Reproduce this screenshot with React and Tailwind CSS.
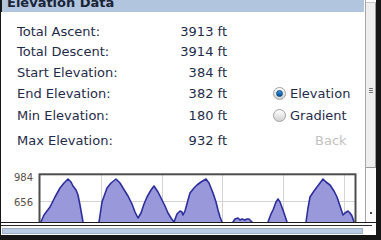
import React from 'react';

const profile = [
  [40, 224], [44, 215], [50, 207], [55, 197], [60, 188], [64, 183], [68, 179], [71, 182], [73, 186],
  [76, 190], [78, 195], [80, 205], [83, 222], [86, 232], [92, 236], [97, 230], [99, 222], [102, 202],
  [107, 188], [111, 183], [116, 179], [120, 183], [123, 188], [128, 196], [132, 204], [135, 212],
  [138, 218], [141, 213], [144, 204], [147, 197], [151, 190], [154, 186], [158, 192], [162, 200],
  [165, 206], [168, 213], [171, 218], [174, 222], [177, 214], [180, 211], [182, 212], [183, 215],
  [185, 211], [188, 200], [190, 193], [194, 188], [197, 185], [201, 182], [206, 179], [209, 183],
  [211, 188], [213, 193], [216, 202], [218, 210], [220, 217], [222, 222], [226, 230], [230, 228],
  [233, 222], [235, 219], [238, 218], [240, 220], [242, 219], [245, 220], [247, 219], [249, 219],
  [252, 222], [258, 232], [265, 228], [268, 222], [271, 214], [273, 210], [276, 202], [278, 199],
  [280, 202], [283, 210], [285, 216], [287, 222], [292, 232], [302, 230], [306, 222], [308, 208],
  [310, 197], [314, 191], [317, 187], [320, 183], [323, 179], [326, 182], [330, 185], [334, 191],
  [337, 197], [340, 206], [343, 215], [345, 213], [348, 211], [350, 213], [352, 216], [354, 222],
  [356, 228],
];

const line = profile.map(([x, y], i) => `${i ? 'L' : 'M'}${x},${y}`).join(' ');
const area = `${line} L356,250 L40,250 Z`;

const stats = [
  ['Total Ascent:', '3913 ft'],
  ['Total Descent:', '3914 ft'],
  ['Start Elevation:', '384 ft'],
  ['End Elevation:', '382 ft'],
  ['Min Elevation:', '180 ft'],
  ['Max Elevation:', '932 ft'],
];

function Radio({ checked, label }) {
  return (
    <label className="flex items-center gap-[4px]">
      <span className="shrink-0 w-[13px] h-[13px] rounded-full border border-[#a0a0a0] bg-gradient-to-b from-white to-[#d2d2d2] flex items-center justify-center">
        {checked && (
          <span className="shrink-0 w-[7px] h-[7px] rounded-full bg-gradient-to-b from-[#3a9ae6] to-[#0a4c92] border border-[#0d4a85]" />
        )}
      </span>
      <span>{label}</span>
    </label>
  );
}

function ElevationChart() {
  return (
    <svg width="364" height="62" viewBox="1 160 364 62" className="block">
      <defs>
        <clipPath id="plot">
          <rect x="40" y="174" width="315" height="60" />
        </clipPath>
      </defs>
      <text x="33" y="181" textAnchor="end" fontSize="10" fill="#5a5048" fontFamily="DejaVu Sans, sans-serif">984</text>
      <text x="33" y="205.5" textAnchor="end" fontSize="10" fill="#5a5048" fontFamily="DejaVu Sans, sans-serif">656</text>
      <g stroke="#d4d4d4" strokeWidth="1">
        <line x1="40" y1="201.5" x2="355" y2="201.5" />
        <line x1="101.5" y1="174" x2="101.5" y2="230" />
        <line x1="162.5" y1="174" x2="162.5" y2="230" />
        <line x1="222.5" y1="174" x2="222.5" y2="230" />
        <line x1="283.5" y1="174" x2="283.5" y2="230" />
        <line x1="344.5" y1="174" x2="344.5" y2="230" />
      </g>
      <g clipPath="url(#plot)">
        <path d={area} fill="#9898da" />
        <path d={line} fill="none" stroke="#2e2e9c" strokeWidth="1.6" strokeLinejoin="round" />
      </g>
      <rect x="39.5" y="174.3" width="316" height="60" fill="none" stroke="#4d4d4d" strokeWidth="2" />
    </svg>
  );
}

export default function App() {
  return (
    <div className="w-[381px] h-[240px] bg-[#161616] overflow-hidden font-['DejaVu_Sans',sans-serif] text-[13px] text-[#1f2b4a]">
      <div className="ml-[1px] w-[375px] h-[235px] bg-white flex flex-col">
        <div className="flex h-[223px] border-b border-[#1a1a1a]">
          <div className="w-[364px] flex flex-col">
            <div className="w-[363px] h-[12px] bg-[#b1c5df] border-l border-[#1a1a1a] overflow-hidden pl-[5px]">
              <div className="font-bold leading-[13px] -mt-[4px] text-[#1a2438]">Elevation Data</div>
            </div>
            <div className="pl-[16px] pt-[10px] grid grid-cols-[150px_60px_100px] grid-rows-[20px_20px_21px_21px_23px_28px] items-center">
              {stats.map(([k, v], i) => (
                <React.Fragment key={k}>
                  <div className="col-start-1" style={{ gridRow: i + 1 }}>{k}</div>
                  <div className="col-start-2 text-right" style={{ gridRow: i + 1 }}>{v}</div>
                </React.Fragment>
              ))}
              <div className="col-start-3 row-start-4 pl-[46px]">
                <Radio checked label="Elevation" />
              </div>
              <div className="col-start-3 row-start-5 pl-[46px]">
                <Radio label="Gradient" />
              </div>
              <div className="col-start-3 row-start-6 pl-[88px] text-[#c2c2c2]">Back</div>
            </div>
            <div className="mt-auto">
              <ElevationChart />
            </div>
          </div>
          <div className="w-[11px] border-l border-[#a6a6a6] flex flex-col">
            <div className="h-[3px] border-b border-[#c8c8c8]" />
            <div className="h-[165px] bg-[#eeeeee] border-r border-[#7a7a7a] border-b border-[#9a9a9a] flex flex-col items-center justify-center gap-[1px] pt-[10px]">
              <span className="w-[4px] h-[1px] bg-[#777]" />
              <span className="w-[4px] h-[1px] bg-[#777]" />
              <span className="w-[4px] h-[1px] bg-[#777]" />
            </div>
            <div className="flex-1 bg-[#fafafa] flex items-end justify-center pb-[8px]">
              <span className="w-[2px] h-[2px] bg-[#444]" />
            </div>
          </div>
        </div>
        <div className="flex-1 flex flex-col">
          <div className="mt-[2px] h-[1px] w-[371px] bg-[#2a2a2a]" />
          <div className="mt-[2px] ml-[1px] w-[361px] h-[6px] bg-[#b9cce4] border border-[#9fb0c6]" />
        </div>
      </div>
    </div>
  );
}
